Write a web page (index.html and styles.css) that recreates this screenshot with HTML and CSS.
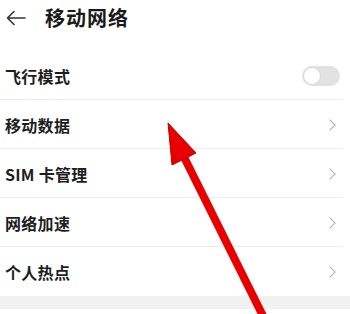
FILE: index.html
```html
<!DOCTYPE html>
<html lang="zh">
<head>
<meta charset="utf-8">
<link rel="stylesheet" href="styles.css">
</head>
<body>
<div class="page">
  <header class="topbar">
    <svg class="back" width="20" height="16" viewBox="0 0 20 16"><path d="M8 1.5 L1.5 8 L8 14.5 M1.5 8 H19" fill="none" stroke="#333" stroke-width="1.6" stroke-linecap="round" stroke-linejoin="round"/></svg>
    <h1 class="title">移动网络</h1>
  </header>
  <ul class="list">
    <li class="row"><span class="label">飞行模式</span><span class="toggle"><span class="knob"></span></span></li>
    <li class="row"><span class="label">移动数据</span><span class="chev"></span></li>
    <li class="row"><span class="label">SIM 卡管理</span><span class="chev"></span></li>
    <li class="row"><span class="label">网络加速</span><span class="chev"></span></li>
    <li class="row last"><span class="label">个人热点</span><span class="chev"></span></li>
  </ul>
  <div class="band"></div>
  <svg class="pointer" width="350" height="314" viewBox="0 0 350 314">
    <line x1="183" y1="155" x2="266" y2="322" stroke="#e80000" stroke-width="8"/>
    <polygon points="168,123 196,153 172,165" fill="#e80000" stroke="#c00000" stroke-width="1" stroke-linejoin="round"/>
  </svg>
</div>
</body>
</html>
```
FILE: styles.css
```css
* { box-sizing: border-box; }
html, body { margin: 0; padding: 0; background: #fff; }
body { font-family: "Noto Sans CJK SC", "Noto Sans", sans-serif; color: #1a1a1a; }
.page { position: relative; width: 350px; height: 314px; overflow: hidden; background: #fff; }
.topbar { height: 51px; display: flex; align-items: center; padding: 0 0 15px 6px; }
.back { display: block; }
.title { margin: 0 0 0 19px; font-size: 20px; font-weight: 700; letter-spacing: 1px; line-height: 1; color: #1a1a1a; }
.list { list-style: none; margin: 0; padding: 0; }
.row { height: 49px; display: flex; align-items: center; justify-content: space-between; padding: 1px 7px 0 5px; margin-right: 7px; border-bottom: 1px solid #ececec; }
.row.last { border-bottom: none; }
.label { font-size: 16px; font-weight: 700; color: #1e1e1e; letter-spacing: 0.3px; }
.toggle { width: 38px; height: 20px; border-radius: 10px; background: #e2e2e2; position: relative; margin-right: -4px; }
.knob { position: absolute; left: 1px; top: 1px; width: 18px; height: 18px; border-radius: 50%; background: #fff; border: 1px solid #d8d8d8; }
.chev { width: 8px; height: 8px; border-right: 1.5px solid #b0b0b0; border-top: 1.5px solid #b0b0b0; transform: rotate(45deg); margin-right: 2px; }
.band { height: 13px; background: #f1f1f1; }
.pointer { position: absolute; left: 0; top: 0; }
```
